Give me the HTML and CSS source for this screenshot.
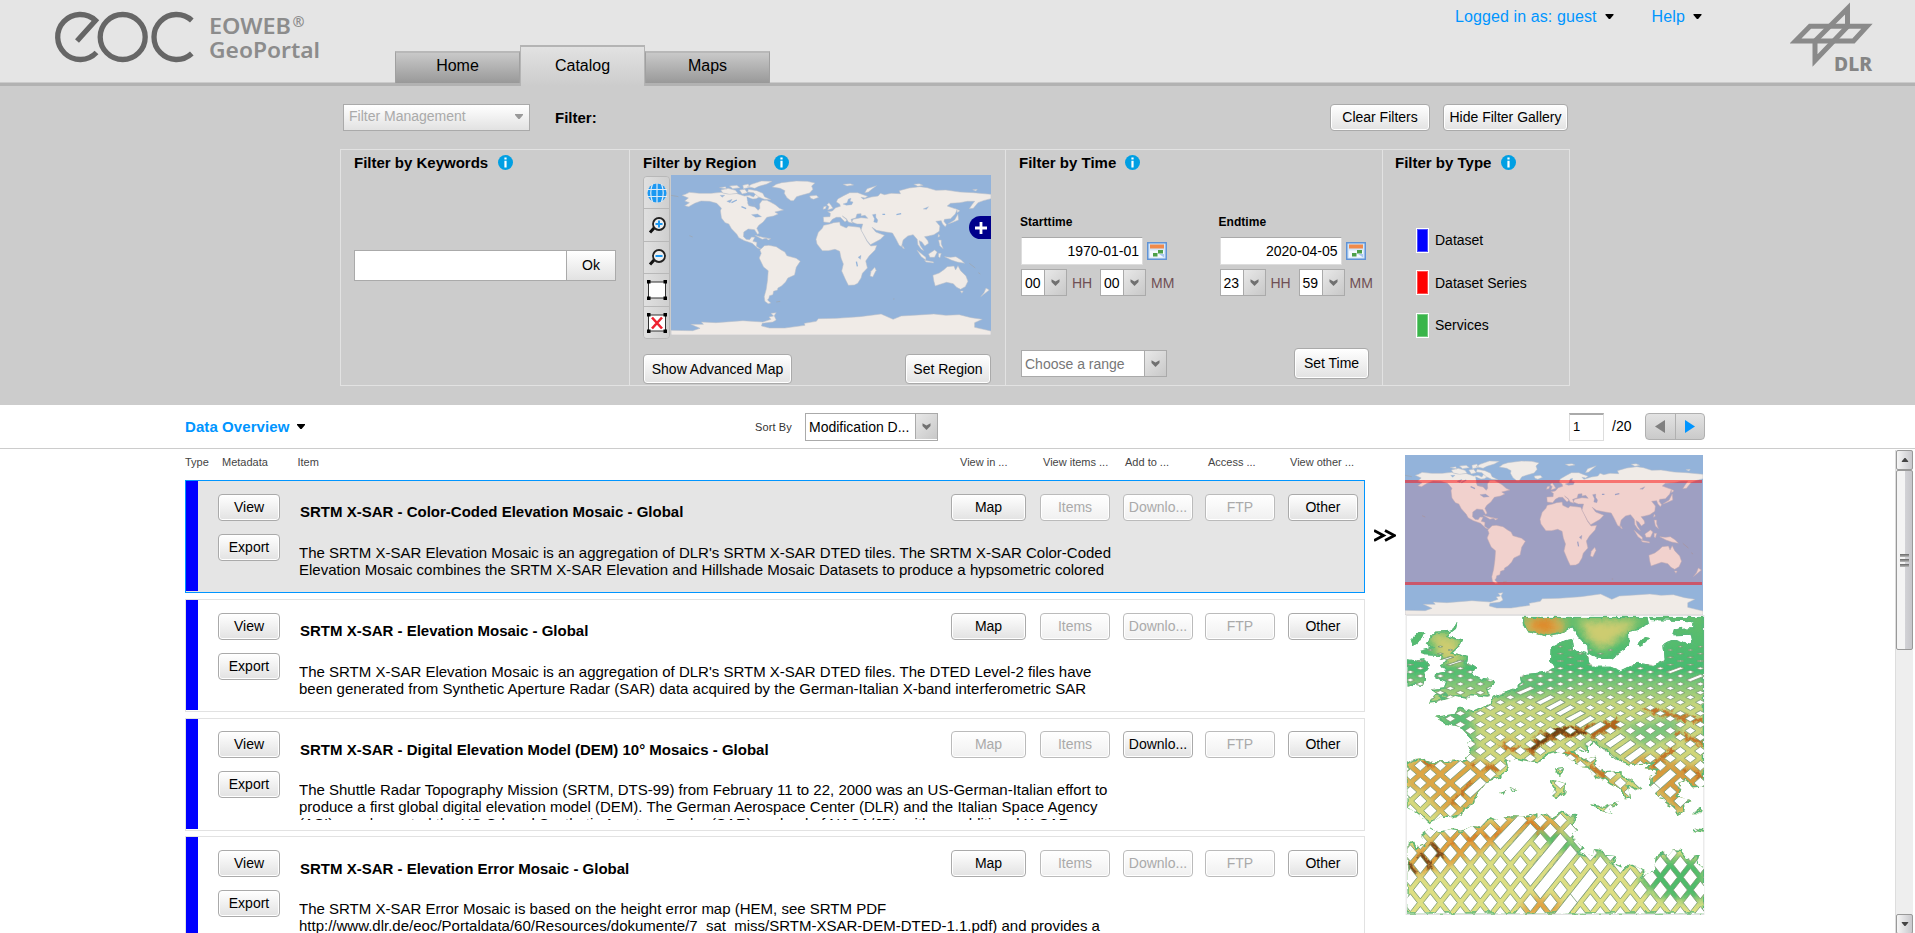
FILE: index.html
```html
<!DOCTYPE html>
<html lang="en">
<head>
<meta charset="utf-8">
<title>EOWEB GeoPortal</title>
<link rel="stylesheet" href="styles.css">
</head>
<body>
<svg class="defs" width="0" height="0">
  <symbol id="world" viewBox="125 105 958 480" preserveAspectRatio="none">
    <rect x="125" y="105" width="958" height="480" fill="#93b3da"/>
    <g fill="#f0ebe7" stroke="#b9bfc8" stroke-width="1.6" stroke-linejoin="round">
      <path d="M158 166L168 163 180 157 210 160 245 160 275 157 292 161 320 160 345 168 360 166 372 171 378 163 390 170 380 176 362 178 354 188 358 197 376 201 386 211 391 205 390 192 398 181 412 181 424 187 437 194 450 205 462 210 436 216 446 222 432 228 412 232 401 246 388 256 382 265 389 280 384 283 375 269 356 267 343 276 342 290 350 298 360 299 366 291 376 292 370 304 382 307 381 319 395 328 385 325 368 310 345 302 328 293 322 283 306 266 298 252 287 248 276 234 273 212 276 205 262 190 240 184 215 183 196 190 178 200 166 197 180 188 166 183 177 174Z"/>
      <path d="M428 141L440 133 456 128 500 123 533 124 556 129 546 138 550 148 540 159 515 166 501 170 492 182 484 182 472 173 464 160 466 152 452 145Z"/>
      <path d="M357 148L382 152 400 160 405 170 424 179 404 178 386 170 372 158 354 156ZM274 150L296 145 318 151 325 160 300 163 280 159ZM366 133L396 123 428 124 412 132 388 139 376 145 354 140ZM330 150L346 148 354 158 338 162ZM300 138L322 136 332 143 310 146ZM340 136L356 132 362 142 342 146ZM270 143L288 140 292 147Z"/>
      <path d="M391 330L405 317 418 316 440 320 455 330 466 336 472 347 500 355 512 364 500 382 495 405 475 414 468 426 456 438 445 444 444 450 432 454 430 464 420 467 418 475 414 480 424 489 416 491 406 484 404 470 410 448 414 420 416 392 402 381 389 354 395 340Z"/>
      <path d="M582 256L600 252 612 248 630 246 632 256 650 264 656 258 690 262 700 280 712 304 723 318 741 316 736 330 718 348 708 363 713 384 698 400 694 414 684 430 674 435 656 436 648 420 636 393 641 372 634 354 630 334 616 328 596 332 578 332 562 312 559 298 566 277 578 265Z"/>
      <path d="M735 382L739 391 729 411 721 408 724 394Z"/>
      <path d="M582 246L581 231 601 230 602 220 594 215 608 213 618 203 632 199 630 192 620 186 624 177 642 167 660 158 684 158 700 164 714 169 706 174 694 172 700 178 724 171 745 168 752 160 764 164 784 160 812 161 808 152 838 144 870 140 892 143 918 151 948 150 990 156 1030 158 1083 163 1083 176 1060 182 1044 188 1030 205 1018 206 1026 194 1034 184 1012 184 990 188 962 190 952 198 972 205 982 208 976 222 962 236 944 238 942 244 950 254 946 260 938 252 934 242 918 244 930 258 928 274 912 284 896 288 884 290 894 302 896 310 885 318 876 306 868 302 871 316 882 332 874 328 864 314 862 298 850 284 834 288 820 300 815 320 808 316 798 296 788 279 768 276 740 271 727 262 738 276 764 286 752 298 722 314 712 302 694 270 699 252 682 252 666 246 670 238 694 233 714 235 706 226 694 228 694 221 682 222 678 234 664 238 668 250 656 246 650 236 638 228 652 240 646 246 640 240 632 232 620 232 608 238 600 248Z"/>
      <path d="M598 188L604 196 610 205 594 210 598 200 592 194ZM582 200L590 198 588 206 580 208ZM540 168L560 166 567 172 552 178 543 175ZM705 158L712 146 740 137 726 148 716 156ZM640 133L662 131 672 135 652 138ZM852 133L868 131 880 136 864 139ZM1028 149L1042 148 1038 153Z"/>
      <path d="M909 406L928 399 942 389 952 380 972 378 977 390 984 377 992 392 1008 408 1014 424 1006 440 992 448 980 442 970 431 950 427 934 432 916 438 912 424ZM991 453L1000 453 996 460ZM1068 444L1078 450 1052 470 1062 458Z"/>
      <path d="M944 350L962 352 978 350 994 360 1004 370 982 366 964 360ZM896 342L914 330 922 336 914 352 900 352ZM861 330L888 352 888 360 874 350ZM884 361L910 365 912 369 888 366ZM926 340L934 340 930 354 926 350ZM926 300L934 300 934 312 940 326 930 318ZM981 208L990 212 982 218ZM984 222L986 240 966 248 954 252 974 240ZM926 282L930 288 924 292ZM818 316L824 326 818 324ZM376 286L400 292 412 294 398 298ZM408 294L424 296 416 300Z"/>
      <path d="M125 571L190 572 212 565 184 553 222 553 216 546 260 548 340 542 400 546 424 538 418 531 432 528 424 520 440 518 434 527 440 540 430 546 398 550 396 558 420 564 466 564 526 556 524 550 560 544 566 536 620 535 690 530 754 522 790 538 814 528 880 524 912 522 948 526 988 524 1024 533 1057 538 1034 548 1034 562 1083 573V585H125Z"/>
    </g>
    <g fill="#93b3da" stroke="#a9b9cd" stroke-width="1">
      <path d="M650 196L640 192 652 188 656 177 664 175 661 184 670 186 666 194ZM728 224L738 222 738 232 744 240 742 248 732 246 734 236ZM366 224L384 222 396 230 378 232ZM352 170L370 178 378 196 368 198 354 184ZM272 166L286 166 278 172ZM292 184L308 178 302 188ZM685 352L694 346 692 358ZM880 207L896 200 890 208Z"/>
    </g>
    <path d="M306 188l16-8M336 200l14 6M680 365l3 14M800 224l14-3M758 223h8" stroke="#93b3da" stroke-width="4" fill="none"/>
    <path d="M180 287l10 4M440 486l12-2M1018 370l18 14M125 166l22 4M1045 398l6 4M790 477h4" stroke="#9ba7b4" stroke-width="2.5" fill="none"/>
  </symbol>
  <symbol id="info" viewBox="0 0 15 15">
    <circle cx="7.5" cy="7.5" r="7.5" fill="#009fe3"/>
    <path d="M6.4 2.6h2.2v2H6.400zM6.400 5.800h2.200v6.600H6.400z" fill="#fff"/>
  </symbol>
  <symbol id="cal" viewBox="0 0 20 18">
    <rect x=".75" y=".75" width="18.500" height="16.500" fill="#d5e6f8" stroke="#5f93d6" stroke-width="1.500"/>
    <rect x="3" y="2.500" width="14" height="4" fill="#f08a4b"/>
    <path d="M3 8.500h14v7H3z" fill="#f5f9ff"/>
    <path d="M11 8h5v3.500h-5zM6 11h4.500v3.500H6z" fill="#4da04a"/>
    <path d="M12 12h5v3.500z" fill="#a9c8ee"/>
  </symbol>
  <symbol id="chev" viewBox="0 0 9 7"><path d="M.5 .3L4.500 2.600 8.500 .3V3L4.500 7 .5 3z" fill="#707070"/></symbol>
  <symbol id="tri" viewBox="0 0 8 5"><path d="M0 0h8v1L4.600 5H3.400L0 1z" fill="currentColor"/></symbol>
</svg>

<header class="header">
  <svg class="brand" width="270" height="62" viewBox="50 8 270 62">
    <g fill="none" stroke="#666" stroke-width="5.300">
      <path d="M77 41L95.500 20.500A22.500 22.500 0 1 0 96.500 52.500"/>
      <circle cx="122.700" cy="37" r="22.500"/>
      <path d="M191.800 20.500A22.500 22.500 0 1 0 191.800 53.500"/>
    </g>
    <g class="brand-text">
      <text x="209" y="34.300" textLength="82" lengthAdjust="spacingAndGlyphs">EOWEB</text>
      <text class="reg" x="292.500" y="27" textLength="12" lengthAdjust="spacingAndGlyphs">®</text>
      <text x="209" y="58" textLength="111" lengthAdjust="spacingAndGlyphs">GeoPortal</text>
    </g>
  </svg>
  <nav class="tabs">
    <a class="tab">Home</a><a class="tab tab-on">Catalog</a><a class="tab">Maps</a>
  </nav>
  <div class="user">
    <span class="menu">Logged in as: guest <svg><use href="#tri"/></svg></span>
    <span class="menu">Help <svg><use href="#tri"/></svg></span>
  </div>
  <svg class="dlr" width="86" height="80" viewBox="0 0 86 80">
    <g fill="none" stroke="#8a8a8a" stroke-width="5">
      <path d="M5.500 41L20 26.200H77L63.500 41Z"/>
      <path d="M57.500 8.500V26.500L25 60.500V41Z"/>
    </g>
    <text x="44" y="71" textLength="38" lengthAdjust="spacingAndGlyphs">DLR</text>
  </svg>
</header>

<section class="filters">
  <div class="filter-bar">
    <div class="manage">Filter Management <svg><use href="#tri"/></svg></div>
    <b class="filter-label">Filter:</b>
    <button class="btn clear">Clear Filters</button>
    <button class="btn hide">Hide Filter Gallery</button>
  </div>
  <div class="gallery">
    <div class="panel">
      <h3>Filter by Keywords <svg><use href="#info"/></svg></h3>
      <div class="keyword"><span class="kw-input"></span><span class="kw-ok">Ok</span></div>
    </div>
    <div class="panel region">
      <h3>Filter by Region <svg class="wide-gap"><use href="#info"/></svg></h3>
      <div class="map-box">
        <div class="tools">
          <i><svg viewBox="0 0 20 20"><circle cx="10" cy="10" r="9.500" fill="#1c98f2"/><path d="M10 0v20M0 6.500h20M0 13.500h20M5.500 1Q2 10 5.500 19M14.500 1Q18 10 14.500 19" stroke="#dceaf6" stroke-width="1.200" fill="none"/></svg></i>
          <i><svg viewBox="0 0 20 20"><path d="M7.500 11.500L3 16.500" stroke="#111" stroke-width="3"/><circle cx="12" cy="8" r="6" fill="#eee" stroke="#222" stroke-width="1.800"/><path d="M12 4.500v7M8.500 8h7" stroke="#1c98f2" stroke-width="2"/></svg></i>
          <i><svg viewBox="0 0 20 20"><path d="M7.500 11.500L3 16.500" stroke="#111" stroke-width="3"/><circle cx="12" cy="8" r="6" fill="#eee" stroke="#222" stroke-width="1.800"/><path d="M8.500 8h7" stroke="#1c98f2" stroke-width="2"/></svg></i>
          <i><svg viewBox="0 0 20 20"><path d="M1.500 2h17v16h-17z" fill="#fff" stroke="#333"/><path d="M0 0h3.500v3.500H0zM16.500 0H20v3.500h-3.500zM0 16.500h3.500V20H0zM16.500 16.500H20V20h-3.500z"/></svg></i>
          <i><svg viewBox="0 0 20 20"><path d="M1.500 2h17v16h-17z" fill="#fff" stroke="#333"/><path d="M0 0h3.500v3.500H0zM16.500 0H20v3.500h-3.500zM0 16.500h3.500V20H0zM16.500 16.500H20V20h-3.500z"/><path d="M5 4.500l10 11M15 4.500l-10 11" stroke="#ee2230" stroke-width="2.600"/></svg></i>
        </div>
        <div class="map">
          <svg width="320" height="160"><use href="#world" width="320" height="160"/></svg>
          <span class="plus"><svg viewBox="0 0 12 12"><path d="M6 0v12M0 6h12" stroke="#fff" stroke-width="2.800"/></svg></span>
        </div>
      </div>
      <div class="split"><button class="btn adv">Show Advanced Map</button><button class="btn setr">Set Region</button></div>
    </div>
    <div class="panel time">
      <h3>Filter by Time <svg><use href="#info"/></svg></h3>
      <div class="times">
        <div class="when">
          <b>Starttime</b>
          <div class="date"><span>1970-01-01</span><svg><use href="#cal"/></svg></div>
          <div class="hm"><span class="sel">00<i><svg><use href="#chev"/></svg></i></span><em>HH</em><span class="sel">00<i><svg><use href="#chev"/></svg></i></span><em>MM</em></div>
        </div>
        <div class="when">
          <b>Endtime</b>
          <div class="date"><span>2020-04-05</span><svg><use href="#cal"/></svg></div>
          <div class="hm"><span class="sel">23<i><svg><use href="#chev"/></svg></i></span><em>HH</em><span class="sel">59<i><svg><use href="#chev"/></svg></i></span><em>MM</em></div>
        </div>
      </div>
      <div class="range-row">
        <span class="sel range">Choose a range<i><svg><use href="#chev"/></svg></i></span>
        <button class="btn sett">Set Time</button>
      </div>
    </div>
    <div class="panel last">
      <h3>Filter by Type <svg><use href="#info"/></svg></h3>
      <ul class="types">
        <li><i class="blue"></i>Dataset</li>
        <li><i class="red"></i>Dataset Series</li>
        <li><i class="green"></i>Services</li>
      </ul>
    </div>
  </div>
</section>

<section class="overview">
  <b class="ov-title">Data Overview <svg><use href="#tri"/></svg></b>
  <span class="sortby">Sort By</span>
  <span class="sel sort">Modification D...<i><svg><use href="#chev"/></svg></i></span>
  <span class="page-no">1</span>
  <span class="page-of">/20</span>
  <span class="pager"><i><svg viewBox="0 0 10 13"><path d="M10 0v13L0 6.500z" fill="#808080"/></svg></i><i><svg viewBox="0 0 10 13"><path d="M0 0v13l10-6.500z" fill="#0095ff"/></svg></i></span>
</section>

<main class="main">
  <div class="list">
    <div class="heads"><span>Type</span><span>Metadata</span><span>Item</span><span>View in ...</span><span>View items ...</span><span>Add to ...</span><span>Access ...</span><span>View other ...</span></div>

    <article class="row row-on">
      <i class="bar"></i>
      <div class="meta"><button class="btn">View</button><button class="btn">Export</button></div>
      <div class="item"><h4>SRTM X-SAR - Color-Coded Elevation Mosaic - Global</h4>
        <p>The SRTM X-SAR Elevation Mosaic is an aggregation of DLR's SRTM X-SAR DTED tiles. The SRTM X-SAR Color-Coded<br>Elevation Mosaic combines the SRTM X-SAR Elevation and Hillshade Mosaic Datasets to produce a hypsometric colored</p></div>
      <div class="acts"><button class="btn">Map</button><button class="btn off">Items</button><button class="btn off">Downlo...</button><button class="btn off">FTP</button><button class="btn">Other</button></div>
    </article>
    <article class="row">
      <i class="bar"></i>
      <div class="meta"><button class="btn">View</button><button class="btn">Export</button></div>
      <div class="item"><h4>SRTM X-SAR - Elevation Mosaic - Global</h4>
        <p>The SRTM X-SAR Elevation Mosaic is an aggregation of DLR's SRTM X-SAR DTED files. The DTED Level-2 files have<br>been generated from Synthetic Aperture Radar (SAR) data acquired by the German-Italian X-band interferometric SAR</p></div>
      <div class="acts"><button class="btn">Map</button><button class="btn off">Items</button><button class="btn off">Downlo...</button><button class="btn off">FTP</button><button class="btn">Other</button></div>
    </article>
    <article class="row row-up">
      <i class="bar"></i>
      <div class="meta"><button class="btn">View</button><button class="btn">Export</button></div>
      <div class="item"><h4>SRTM X-SAR - Digital Elevation Model (DEM) 10° Mosaics - Global</h4>
        <p>The Shuttle Radar Topography Mission (SRTM, DTS-99) from February 11 to 22, 2000 was an US-German-Italian effort to<br>produce a first global digital elevation model (DEM). The German Aerospace Center (DLR) and the Italian Space Agency<br>(ASI) supplemented the US C-band Synthetic Aperture Radar (SAR) payload of NASA/JPL with an additional X-SAR</p></div>
      <div class="acts"><button class="btn off">Map</button><button class="btn off">Items</button><button class="btn">Downlo...</button><button class="btn off">FTP</button><button class="btn">Other</button></div>
    </article>
    <article class="row">
      <i class="bar"></i>
      <div class="meta"><button class="btn">View</button><button class="btn">Export</button></div>
      <div class="item item-low"><h4>SRTM X-SAR - Elevation Error Mosaic - Global</h4>
        <p>The SRTM X-SAR Error Mosaic is based on the height error map (HEM, see SRTM PDF<br>http://www.dlr.de/eoc/Portaldata/60/Resources/dokumente/7_sat_miss/SRTM-XSAR-DEM-DTED-1.1.pdf) and provides a</p></div>
      <div class="acts"><button class="btn">Map</button><button class="btn off">Items</button><button class="btn off">Downlo...</button><button class="btn off">FTP</button><button class="btn">Other</button></div>
    </article>
  </div>

  <svg class="more" width="22" height="13" viewBox="0 0 22 13"><path d="M0 1.500L9.500 6.500 0 11.500M11 1.500L20.500 6.500 11 11.500" fill="none" stroke="#000" stroke-width="2.800"/></svg>

  <aside class="preview">
    <div class="extent">
      <svg width="298" height="160"><use href="#world" width="298" height="160"/></svg>
      <span class="box"></span>
    </div>
    <svg class="dem" width="300" height="300" viewBox="45 45 896 900">
      <defs>
        <linearGradient id="base" x1="0" y1="0" x2="0" y2="1">
          <stop offset="0" stop-color="#62bd6c"/><stop offset=".18" stop-color="#45bb70"/><stop offset=".24" stop-color="#8cc878"/><stop offset=".3" stop-color="#c6d57c"/><stop offset=".5" stop-color="#d2d67a"/><stop offset="1" stop-color="#dfe085"/>
        </linearGradient>
        <filter id="soft" x="-30%" y="-30%" width="160%" height="160%"><feGaussianBlur stdDeviation="14"/></filter>
        <filter id="fine" x="-30%" y="-30%" width="160%" height="160%">
          <feGaussianBlur stdDeviation="3" result="b"/>
          <feTurbulence type="fractalNoise" baseFrequency=".06" numOctaves="3" seed="4"/>
          <feDisplacementMap in="b" scale="26" xChannelSelector="R" yChannelSelector="G"/>
        </filter>
        <filter id="coast" x="0" y="0" width="100%" height="100%">
          <feTurbulence type="fractalNoise" baseFrequency=".05" numOctaves="2" seed="9"/>
          <feDisplacementMap in="SourceGraphic" scale="16" xChannelSelector="R" yChannelSelector="G"/>
        </filter>
        <path id="shore" d="M50 178L78 182 100 178 118 195 104 215 106 240 95 258 72 254 50 260ZM60 118L82 98 104 96 92 124 66 136ZM118 110L134 95 180 92 188 76 200 70 196 86 168 108 216 118 206 140 186 158 230 168 226 186 258 206 240 218 270 236 306 240 312 252 290 270 300 290 242 286 226 296 190 290 166 298 150 290 120 268 160 262 166 245 134 232 136 220 166 214 150 192 172 180 146 180 150 168 100 166 88 150 120 142 104 128ZM112 308L132 284 160 280 172 294 150 304ZM395 50H770L774 68 750 88 715 95 716 130 700 150 660 176 620 176 592 160 590 140 560 108 545 82 520 98 465 109 410 96 397 75ZM775 50H940V560L905 562 886 540 862 548 872 570 860 590 905 602 880 612 882 634 858 646 846 622 825 612 818 594 800 590 778 556 780 530 800 510 762 508 782 488 715 496 680 480 650 458 625 440 606 425 592 440 592 458 566 448 548 456 580 478 618 470 612 490 648 516 690 514 690 528 720 536 752 566 736 572 712 556 718 596 702 598 690 570 656 552 640 538 612 534 592 500 568 498 540 480 520 462 498 456 470 462 440 490 412 484 375 476 348 484 352 500 332 530 290 545 260 582 248 612 220 626 212 646 190 652 150 650 118 670 80 640 50 622V490L70 478 98 474 110 484 160 484 225 480 236 460 230 428 246 420 208 380 166 372 130 350 192 342 206 320 250 334 300 310 310 290 370 268 395 250 390 228 410 222 460 216 492 204 478 182 480 144 520 122 546 116 550 150 590 160 596 186 608 200 660 200 690 212 740 188 790 196 822 180 818 130 850 118 890 132 905 128 900 104 845 106 850 90 870 84 905 82 905 64 780 60ZM740 132L760 108 778 112 766 128 746 138ZM490 508L520 504 508 532ZM478 544L490 540 526 552 524 580 500 594 482 588 492 566ZM598 612L640 620 684 602 682 616 656 626 662 642 630 632ZM905 684L938 688 936 698 915 694ZM905 640L935 622 930 640ZM325 575L350 570 340 584ZM360 562L380 568 366 574ZM50 728L66 722 76 742 100 734 92 704 116 684 126 690 150 694 180 688 214 692 244 678 262 680 300 652 318 660 350 648 400 650 440 640 440 656 452 646 470 640 484 652 516 634 540 646 560 644 544 672 562 690 544 700 562 730 582 748 560 756 606 768 610 748 636 750 646 768 672 766 676 784 664 790 700 806 716 790 764 814 750 830 790 812 796 770 816 752 830 770 850 748 870 750 890 776 926 766 918 790 940 806V941H50Z"/>
        <clipPath id="land"><use href="#shore"/></clipPath>
      </defs>
      <rect x="46.500" y="46.500" width="893" height="897" fill="#fff" stroke="#e2e2e2" stroke-width="3"/>
      <g filter="url(#coast)">
      <g clip-path="url(#land)">
        <rect x="50" y="48" width="890" height="893" fill="url(#base)"/>
        <g filter="url(#soft)">
          <path d="M110 90L200 110 220 200 150 190ZM560 60H740L720 90 640 150 600 130Z" fill="#cdcc70"/>
          <ellipse cx="460" cy="78" rx="66" ry="36" fill="#d9b556"/>
          <ellipse cx="460" cy="75" rx="40" ry="22" fill="#de8420"/>
          <path d="M120 330L240 320 260 480 210 440ZM280 300L480 210 560 250 420 280Z" fill="#5bbd74"/>
          <path d="M680 380L860 350 870 400 760 440ZM560 430L600 420 700 490 660 490Z" fill="#78c47a"/>
          <path d="M50 480L230 480 320 500 220 640 150 640 110 580 50 560ZM320 410L380 430 360 460Z" fill="#dca544"/>
          <path d="M700 460L800 480 940 500V560L860 640 780 550ZM520 460L720 570 700 590Z" fill="#d69a3e"/>
          <path d="M50 760L180 690 400 650 500 650 520 690 380 700 200 790 60 830ZM380 944L420 890 500 900 520 944Z" fill="#e0a040"/>
          <path d="M400 690L500 690 580 760 520 760ZM740 850L800 770 940 780V900L830 900Z" fill="#50bb6b"/>
          <path d="M540 640L580 640 700 800 560 740Z" fill="#6cc177"/>
        </g>
        <g filter="url(#fine)" fill="none" stroke-linecap="round">
          <path d="M425 445Q460 395 540 395T675 374" stroke="#b2651c" stroke-width="30"/>
          <path d="M430 442Q470 400 500 395T580 398" stroke="#6e4219" stroke-width="17"/>
          <path d="M240 492L320 505M340 440L380 450M100 490L130 495M190 610L240 550M600 500L640 525M770 330L930 362M860 400L935 430M790 500L850 440M880 510L930 530" stroke="#c47325" stroke-width="14"/>
          <path d="M95 770L118 795M125 740L150 765M50 795L70 815" stroke="#7d4a1a" stroke-width="16"/>
          <path d="M180 730L330 700M400 660L450 690M520 460L600 480" stroke="#d8842c" stroke-width="14"/>
        </g>
        <use href="#shore" fill="none" stroke="#58b878" stroke-width="8"/>
      </g>
      </g>
      <g clip-path="url(#land)"><g id="gaps" fill="#fff" stroke="#7b9a72" stroke-width="2.500"></g></g>
    </svg>
  </aside>

  <div class="scroll">
    <i class="sb-btn"><svg><use href="#tri"/></svg></i>
    <i class="thumb"><b></b><b></b><b></b></i>
    <i class="sb-btn down"><svg><use href="#tri"/></svg></i>
  </div>
</main>
<script src="dem.js"></script>
</body>
</html>
```

FILE: styles.css
```css
* { box-sizing: border-box; }
body {
  margin: 0; width: 1915px; height: 933px; overflow: hidden; background: #fff; color: #000;
  font-family: "Liberation Sans", Arial, sans-serif; font-size: 14px;
  display: flex; flex-direction: column;
}
i, em { font-style: normal; }
.defs { position: absolute; }
svg { display: block; flex: none; }
h3, h4, p, ul { margin: 0; padding: 0; }

.header {
  height: 86px; flex: none; display: flex; align-items: flex-start;
  background: linear-gradient(#e5e5e5 82px, #cbcbcb 82px, #cbcbcb 83px, #b2b2b2 83px);
}
.brand { margin: 8px 75px 0 50px; }
.brand-text { font-family: "Noto Sans", "Open Sans", sans-serif; font-weight: 600; font-size: 22px; fill: #8c8c8c; }
.reg { font-size: 15px; }
.tabs { display: flex; align-items: flex-end; height: 86px; }
.tab {
  width: 125px; height: 32px; margin-bottom: 3px; padding-top: 4px; text-align: center; font-size: 16px; line-height: 18px;
  border: 1px solid #a0a0a0; border-top: 2px solid #b8b8b8; border-bottom: 0; background: linear-gradient(#c9c9c9, #999);
}
.tab-on { height: 41px; margin: 0; padding-top: 10px; border: 1px solid #b4b4b4; border-bottom: 0; border-top-width: 2px; background: linear-gradient(#e2e2e2, #ccc); }
.user { display: flex; gap: 38px; margin: 7px 0 0 685px; color: #0095ff; font-size: 16px; line-height: 19px; letter-spacing: .1px; }
.menu { display: flex; align-items: center; gap: 8px; white-space: nowrap; }
.menu svg { width: 9px; height: 5px; color: #000; }
.dlr { margin: 0 39px 0 auto; }
.dlr text { font: 800 20px "Noto Sans", sans-serif; fill: #858585; }

.btn {
  font: 14px "Liberation Sans", Arial, sans-serif; color: #000; padding: 0 0 1px; height: 27px; white-space: nowrap;
  border: 1px solid #aaa; border-radius: 4px; background: linear-gradient(#fff, #e2e2e2);
  box-shadow: inset 0 0 0 1px #fff;
}
.off { color: #aaa; border-color: #bbb; background: linear-gradient(#fff, #f0f0f0); }

.filters { height: 319px; flex: none; background: #ccc; padding: 18px 345px 0 340px; }
.filter-bar { display: flex; height: 27px; align-items: center; margin-bottom: 18px; padding: 0 2px 0 3px; }
.manage {
  display: flex; align-items: center; justify-content: space-between; width: 187px; height: 27px; padding: 0 6px 3px 5px;
  border: 1px solid #aaa; background: linear-gradient(#fff, #e2e2e2); color: #aaa;
}
.manage svg { width: 8px; height: 5px; color: #999; }
.filter-label { font-size: 15px; margin-left: 25px; }
.clear { width: 100px; margin-left: auto; margin-right: 13px; }
.hide { width: 125px; }
.gallery { display: grid; grid-template-columns: 288px 376px 377px 1fr; height: 237px; border: 1px solid #e2e2e2; }
.panel { padding: 4px 0 0 13px; border-left: 1px solid #e2e2e2; }
.panel:first-child { border-left: 0; }
.last { padding-left: 12px; }
.panel h3 { display: flex; align-items: center; font-size: 15px; line-height: 17px; height: 17px; white-space: nowrap; }
.panel h3 svg { width: 15px; height: 15px; margin-left: 10px; }
.panel h3 .wide-gap { margin-left: 18px; }
.time h3 svg { margin-left: 9px; }
.keyword { display: flex; margin-top: 79px; width: 262px; height: 31px; }
.kw-input { width: 213px; border: 1px solid #aaa; background: #fff; }
.kw-ok { flex: 1; margin-left: -1px; border: 1px solid #aaa; background: linear-gradient(#fff, #e2e2e2); text-align: center; line-height: 29px; }
.map-box { display: flex; margin: 4px 0 16px 0; height: 163px; }
.tools { width: 27px; height: 163px; margin-top: 1px; display: flex; flex-direction: column; border: 1px solid #b8b8b8; border-radius: 4px; overflow: hidden; }
.tools i { flex: 1; display: flex; align-items: center; justify-content: center; border-bottom: 1px solid #b8b8b8; background: linear-gradient(90deg, #e0e0e0, #cfcfcf); }
.tools i:last-child { border-bottom: 0; }
.tools svg { width: 20px; height: 20px; margin-top: 1px; }
.map { position: relative; width: 320px; height: 160px; margin-left: 1px; }
.plus { position: absolute; right: 0; top: 41px; width: 22px; height: 23px; border-radius: 12px 0 0 12px; background: #00008b; display: flex; align-items: center; justify-content: center; }
.plus svg { width: 12px; height: 12px; margin-left: 2px; }
.split { display: flex; justify-content: space-between; width: 348px; }
.split .btn, .sett { height: 30px; }
.adv { width: 149px; }
.setr { width: 86px; }
.times { display: flex; margin-top: 42px; }
.when { width: 198.500px; flex: none; }
.when > b { display: block; font-size: 12px; line-height: 14px; margin: 2px 0 8px 1px; letter-spacing: .05px; }
.date { display: flex; align-items: center; gap: 4px; margin: 0 0 4px 2px; }
.date span { width: 122px; height: 28px; padding-right: 3px; text-align: right; line-height: 26px; background: #fff; border: 1px solid #ddd; border-top: 1px solid #aaa; }
.date svg { width: 20px; height: 18px; }
.hm { display: flex; align-items: center; margin-left: 2px; color: #6f4f54; }
.hm em { width: 33px; padding-left: 5px; }
.sel { display: flex; align-items: center; justify-content: space-between; flex: none; width: 46px; height: 27px; padding-left: 3px; background: #fff; border: 1px solid #aaa; color: #000; white-space: nowrap; }
.sel i { width: 22px; height: 25px; display: flex; align-items: center; justify-content: center; border-left: 1px solid #aaa; background: linear-gradient(135deg, #e8e8e8, #c8c8c8); }
.sel svg { width: 9px; height: 7px; }
.range-row { display: flex; align-items: center; justify-content: space-between; width: 348px; margin: 52px 0 0 2px; }
.range { width: 146px; color: #777; }
.sett { width: 75px; height: 31px; }
.types { list-style: none; margin: 57px 0 0 21px; display: flex; flex-direction: column; gap: 17.500px; }
.types li { display: flex; align-items: center; gap: 6px; height: 25px; padding-bottom: 1px; }
.types i { width: 13px; height: 25px; flex: none; border: 1px solid #fff; box-shadow: inset 0 0 0 1px rgba(255,255,255,.3); }
.blue { background: #00f; } .red { background: #f00; } .green { background: #39b54a; }

.overview { height: 44px; flex: none; display: flex; align-items: center; border-bottom: 1px solid #ccc; padding: 0 210px 0 185px; }
.ov-title { display: flex; align-items: center; gap: 8px; width: 570px; color: #0095ff; font-size: 15px; letter-spacing: .08px; }
.ov-title svg { width: 8px; height: 5px; color: #000; }
.sortby { font-size: 11px; color: #333; width: 50px; letter-spacing: .1px; }
.sort { width: 133px; height: 28px; }
.page-no { margin-left: auto; width: 35px; height: 28px; border: 1px solid #ddd; border-top: 2px solid #aaa; padding-left: 3px; line-height: 24px; font-size: 13px; }
.page-of { width: 33px; margin: 0 0 2px 8px; }
.pager { display: flex; width: 60px; height: 27px; border: 1px solid #b0b0b0; border-radius: 4px; overflow: hidden; background: linear-gradient(#e3e3e3, #cacaca); }
.pager i { flex: 1; display: flex; align-items: center; justify-content: center; }
.pager i + i { border-left: 1px solid #b0b0b0; }
.pager svg { width: 10px; height: 13px; }

.main { flex: 1; min-height: 0; display: flex; align-items: flex-start; padding-left: 185px; overflow: hidden; }
.list { width: 1180px; flex: none; display: flex; flex-direction: column; gap: 6px; }
.heads {
  display: grid; grid-template-columns: 37px 75.500px 662.500px 83px 82px 83px 82px 1fr;
  height: 25px; padding-top: 6px; font-size: 11px; line-height: 14px; color: #444; white-space: nowrap;
}
.row { display: flex; height: 113px; border: 1px solid #e2e2e2; }
.row-on { border-color: #0095ff; background: #e5e5e5; }
.row-up { margin-bottom: -1px; }
.bar { width: 12px; height: 110px; flex: none; background: #00f; }
.meta { display: flex; flex-direction: column; gap: 13px; width: 62px; flex: none; margin: 13px 0 0 20px; }
.row-up .meta, .row-up .acts { margin-top: 12px; }
.item { margin: 22px -168px 0 19px; width: 820px; flex: none; white-space: nowrap; }
.item h4 { font-size: 15px; line-height: 18px; margin-left: 1px; }
.item p { font-size: 15px; line-height: 17px; margin-top: 23px; height: 39px; overflow: hidden; }
.row-up p { margin-top: 22px; }
.item-low { margin-top: 23px; }
.item-low p { margin-top: 22px; }
.acts { position: relative; display: grid; grid-template-columns: 75px 70px 70px 70px 70px; column-gap: 13px; align-self: flex-start; margin-top: 13px; }
.acts .btn:nth-child(2), .acts .btn:nth-child(3) { position: relative; left: 1px; }
.more { margin: 80px 9px 0 9px; }

.preview { width: 300px; flex: none; padding-top: 6px; }
.extent { position: relative; height: 160px; width: 298px; }
.box { position: absolute; left: 0; right: 1px; top: 25px; height: 105px; background: rgba(255,0,0,.11); border: solid rgba(255,0,0,.45); border-width: 3px 0; }

.scroll { width: 18px; height: 484px; margin: 1px 2px 0 auto; display: flex; flex-direction: column; background: #eee; border-left: 1px solid #ddd; }
.sb-btn { height: 20px; flex: none; display: flex; align-items: center; justify-content: center; border: 1px solid #999; border-radius: 2px; background: linear-gradient(90deg, #f6f6f6, #c8c8cc); }
.sb-btn svg { width: 8px; height: 4px; transform: scaleY(-1); color: #444; }
.down { margin-top: auto; }
.down svg { transform: none; }
.thumb { height: 180px; border: 1px solid #999; border-radius: 2px; background: linear-gradient(90deg, #f4f4f4 50%, #d2d2d6 55%, #c6c6ca); display: flex; flex-direction: column; align-items: center; justify-content: center; gap: 2px; }
.thumb b { width: 9px; height: 3px; background: linear-gradient(#666, #bbb); }
```

FILE: dem.js
```js
// Gaps between the crossing radar swaths: one row of diamonds per orbit crossing,
// flatter towards the north.
const rows = [140, 150, 161, 172, 183, 194, 205, 216, 228, 240, 252, 265, 278, 292, 307, 323, 340, 356, 374,
  392, 412, 432, 453, 475, 497, 523, 549, 576, 603, 632, 661, 692, 724, 759, 794, 832, 870, 908, 946];
const phase = rows.indexOf(870) % 2;
const group = document.getElementById('gaps');

function size(i) {
  const y = rows[i];
  const w = 7 + 14 * Math.sqrt(Math.min(1, Math.max(0, (y - 150) / 550)));
  const h = y < 200 ? 2 : ((rows[i + 1] || y + 38) - y) * w / 30;
  return [w, h];
}
function add(d) {
  const path = document.createElementNS('http://www.w3.org/2000/svg', 'path');
  path.setAttribute('d', d);
  group.appendChild(path);
}

let d = '';
rows.forEach((y, i) => {
  const [w, h] = size(i);
  for (let x = (i % 2 === phase ? 29 : 59) - 60; x < 960; x += 60) {
    if (y < 200 && x > 250 && x < 480) continue;
    if (y < 230 && x > 600 && x < 700 && i % 3 === 0) continue;
    d += `M${x - w} ${y}L${x} ${y - h} ${x + w} ${y} ${x} ${y + h}Z`;
  }
});
add(d);

// Where a swath is missing, neighbouring gaps join into one running north-east.
// Each entry: y of the lowest crossing, approximate x, number of joined gaps.
[[724, 355, 3], [759, 385, 3], [832, 440, 4], [870, 470, 4], [908, 560, 3], [946, 530, 2],
  [523, 180, 2], [549, 210, 2], [576, 220, 2], [603, 840, 2], [576, 800, 2], [549, 810, 2],
  [475, 735, 2], [453, 690, 2], [432, 660, 2], [392, 595, 2], [374, 540, 2], [356, 520, 2],
  [340, 500, 2], [323, 470, 2], [307, 440, 2], [278, 390, 2], [216, 850, 2], [240, 890, 2],
  [183, 170, 2], [194, 200, 2]].forEach(([y, near, n]) => {
  const i = rows.indexOf(y);
  const start = i % 2 === phase ? 29 : 59;
  const x = start + 60 * Math.round((near - start) / 60);
  const [w, h] = size(i);
  const j = i - n + 1;
  const [w2, h2] = size(j);
  const x2 = x + 30 * (n - 1);
  add(`M${x - w} ${y}L${x2} ${rows[j] - h2} ${x2 + w2} ${rows[j]} ${x} ${y + h}Z`);
});
```
